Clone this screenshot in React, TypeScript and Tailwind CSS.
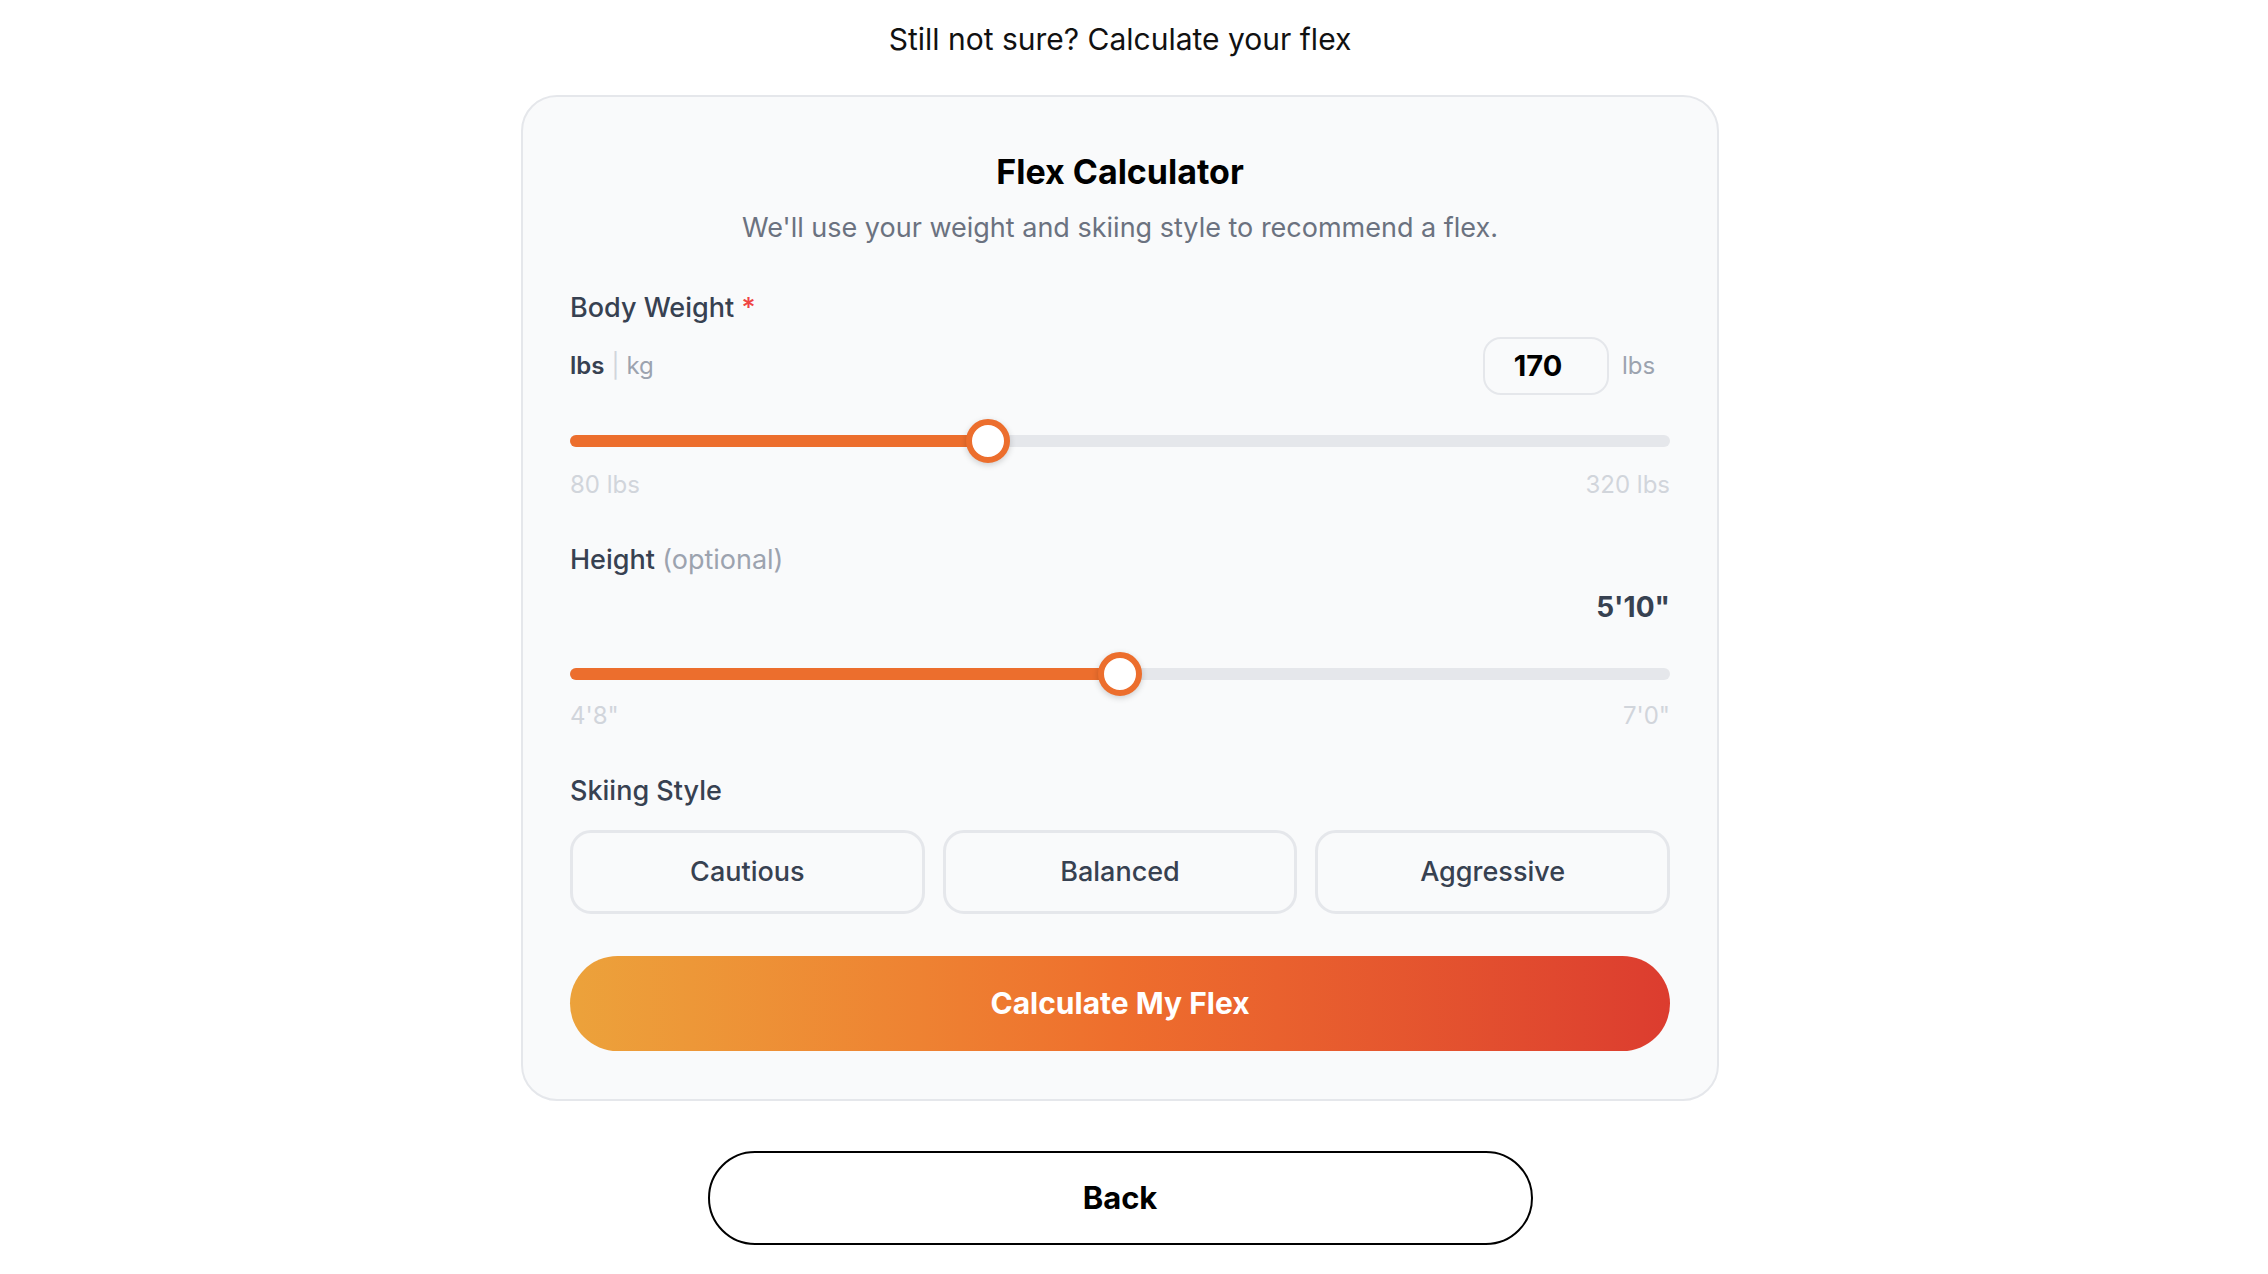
import { useState } from 'react';

const ORANGE = '#ec6e2d';

interface RangeProps {
  value: number;
  min: number;
  max: number;
  minLabel: string;
  maxLabel: string;
  className?: string;
  labelGap: string;
}

// visual-only slider, thumb is inset like a native range input
function FlexSlider({ value, min, max, minLabel, maxLabel, className, labelGap }: RangeProps) {
  const frac = (value - min) / (max - min);
  const thumbSize = 44;
  const center = `calc(${thumbSize / 2}px + ${frac} * (100% - ${thumbSize}px))`;

  return (
    <div className={className}>
      <div className="relative h-[44px] w-full">
        <div className="absolute left-0 right-0 top-[16px] h-[12px] rounded-full bg-[#e5e7eb]" />
        <div
          className="absolute left-0 top-[16px] h-[12px] rounded-full"
          style={{ width: center, backgroundColor: ORANGE }}
        />
        <div
          className="absolute top-0 h-[44px] w-[44px] -translate-x-1/2 rounded-full border-[6px] border-[#ec6e2d] bg-white shadow-[0_2px_6px_rgba(0,0,0,0.18)]"
          style={{ left: center }}
        />
      </div>
      <div className={`${labelGap} flex justify-between text-[24px] leading-[32px] text-[#d1d5db]`}>
        <span>{minLabel}</span>
        <span>{maxLabel}</span>
      </div>
    </div>
  );
}

export default function App() {
  const [weight] = useState(170);
  const [style, setStyle] = useState<string | null>(null);
  const styles = ['Cautious', 'Balanced', 'Aggressive'];

  return (
    <div
      className="min-h-screen w-[2240px] bg-white pt-[18px] text-black"
      style={{ fontFamily: 'Inter, "Noto Sans", sans-serif' }}
    >
      <h2 className="text-center text-[30px] leading-[42px] font-normal text-[#111]">
        Still not sure? Calculate your flex
      </h2>

      <div className="mx-auto mt-[35px] w-[1198px] rounded-[36px] border-2 border-[#e5e7eb] bg-[#f9fafb] px-[47px] pt-[52px] pb-[48px]">
        <h3 className="text-center text-[34px] leading-[46px] font-bold text-black">Flex Calculator</h3>
        <p className="mt-[14px] text-center text-[27px] leading-[38px] text-[#6b7280]">
          We'll use your weight and skiing style to recommend a flex.
        </p>

        <div className="mt-[42px] text-[27px] leading-[38px] font-medium text-[#374151]">
          Body Weight <span className="text-[#ef4444]">*</span>
        </div>

        <div className="mt-[10px] flex items-center justify-between">
          <div className="flex items-center text-[24px] leading-[32px]">
            <span className="font-semibold text-[#374151]">lbs</span>
            <span className="mx-[7px] text-[#d1d5db]">|</span>
            <span className="text-[#9ca3af]">kg</span>
          </div>
          <div className="flex items-center">
            <div className="flex h-[58px] w-[126px] items-center justify-center rounded-[18px] border-2 border-[#e5e7eb] bg-transparent pr-[16px] text-[29px] font-bold text-black">
              {weight}
            </div>
            <span className="ml-[13px] w-[48px] text-[24px] text-[#9ca3af]">lbs</span>
          </div>
        </div>

        <FlexSlider
          className="mt-[24px]"
          labelGap="mt-[6px]"
          value={weight}
          min={80}
          max={320}
          minLabel="80 lbs"
          maxLabel="320 lbs"
        />

        <div className="mt-[40px] text-[27px] leading-[38px] font-medium text-[#374151]">
          Height <span className="font-normal text-[#9ca3af]">(optional)</span>
        </div>
        <div className="mt-[8px] text-right text-[28px] leading-[40px] font-bold text-[#374151]">5'10"</div>

        <FlexSlider
          className="mt-[25px]"
          labelGap="mt-[4px]"
          value={70}
          min={56}
          max={84}
          minLabel={`4'8"`}
          maxLabel={`7'0"`}
        />

        <div className="mt-[40px] text-[27px] leading-[38px] font-medium text-[#374151]">Skiing Style</div>
        <div className="mt-[20px] grid grid-cols-3 gap-[18px]">
          {styles.map((s) => (
            <button
              key={s}
              onClick={() => setStyle(s)}
              className={
                style === s
                  ? 'h-[84px] rounded-[21px] border-[3px] border-[#ec6e2d] bg-white text-[27px] font-medium text-[#374151]'
                  : 'h-[84px] rounded-[21px] border-[3px] border-[#e5e7eb] bg-transparent text-[27px] font-medium text-[#374151]'
              }
            >
              {s}
            </button>
          ))}
        </div>

        <button className="mt-[42px] h-[95px] w-full rounded-full bg-gradient-to-r from-[#eca23b] via-[#ee6e2d] to-[#dc3c2f] text-[30px] font-bold text-white">
          Calculate My Flex
        </button>
      </div>

      <div className="mt-[50px] flex justify-center pb-[29px]">
        <button className="h-[94px] w-[825px] rounded-full border-2 border-black bg-white text-[31px] font-bold text-black">
          Back
        </button>
      </div>
    </div>
  );
}
